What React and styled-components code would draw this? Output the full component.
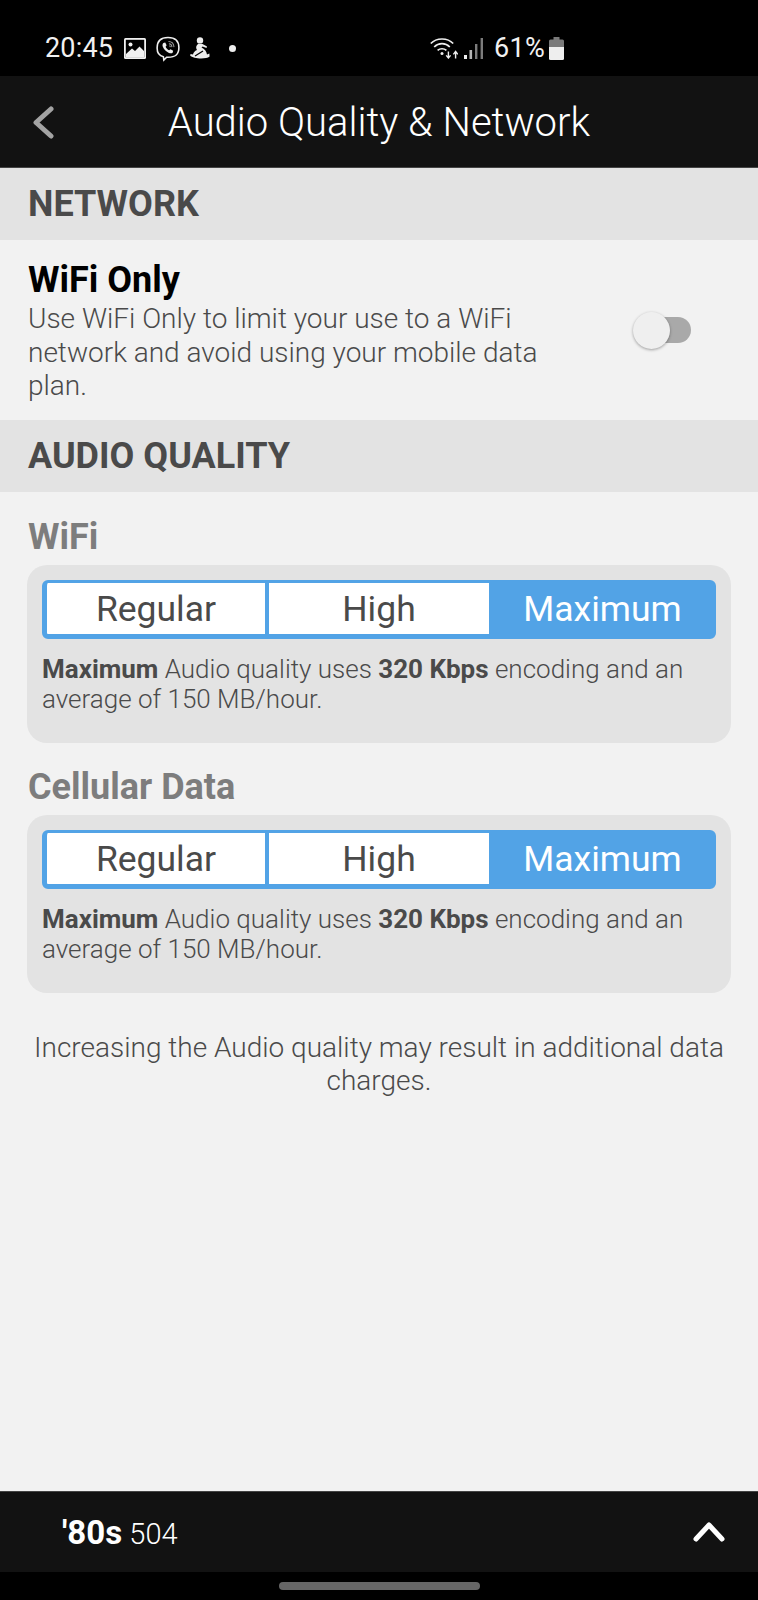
import styled, { createGlobalStyle } from 'styled-components';

const GlobalStyle = createGlobalStyle`
  html, body {
    margin: 0;
    padding: 0;
    background: #f2f2f2;
  }
  * {
    box-sizing: border-box;
  }
`;

const qualityRows = [
  { id: 'wifi', label: 'WiFi' },
  { id: 'cellular', label: 'Cellular Data' },
];
const qualityOptions = ['Regular', 'High', 'Maximum'];

const App = () => (
  <>
    <GlobalStyle />
    <Screen>
      <StatusBar>
        <StatusLeft>
          <StatusText>20:45</StatusText>
          <svg width="22" height="21" viewBox="0 0 22 21">
            <rect x="0" y="0" width="22" height="21" rx="1.5" fill="#f1f1f1" />
            <rect x="1.8" y="1.8" width="18.4" height="17.4" fill="#000" />
            <circle cx="6.5" cy="6.5" r="2" fill="#f1f1f1" />
            <path d="M2 16 L8 10.5 L11 13 L15.5 8.5 L20 13 L20 19.5 L2 19.5 Z" fill="#f1f1f1" />
          </svg>
          <svg width="24" height="27" viewBox="0 0 26 27" fill="none">
            <path d="M8 22.5 C3.5 21.5 1.2 18.5 1.2 13 C1.2 5 5 1.5 13 1.5 C21 1.5 24.8 5 24.8 12.5 C24.8 20 21 23 13 23 L11.5 23 L8.5 26 Z" stroke="#eee" strokeWidth="1.7" />
            <path d="M8 7.5 L10 7 L11.5 10 L10.4 11.6 C11.2 13.4 12.4 14.6 14.2 15.4 L15.8 14.3 L18.6 16 L18 18 C17.2 19 15.6 19 13.6 18 C10.6 16.6 8.8 14.6 7.4 11.6 C6.8 10 7 8.4 8 7.5 Z" fill="#eee" />
            <path d="M13.5 6 C16.8 6.1 19.3 8.6 19.5 12 M14 8.4 C16 8.6 17.2 9.9 17.3 12 M14.4 10.6 C15.2 10.8 15.5 11.2 15.6 12" stroke="#9a9a9a" strokeWidth="1.1" />
          </svg>
          <svg width="20" height="22" viewBox="0 0 20 22" fill="#eee">
            <circle cx="10" cy="3.4" r="3.2" />
            <path d="M8.5 6.8 C6 8.5 5.5 11 7 13 C4.5 14 3.5 15.5 3 17.5 L0.5 17 L0.2 18.8 C3 21.6 15.5 22.8 19.6 19.5 L19.4 16.5 L17 17.5 C16.5 14.5 14.5 12 11.5 10.6 L12.6 9.6 L16.5 11 L17 9.6 L12.5 7 Z" />
            <path d="M5 19 L13 14" stroke="#000" strokeWidth="1.2" />
          </svg>
          <Dot />
        </StatusLeft>
        <StatusRight>
          <svg width="28" height="22" viewBox="0 0 28 22" fill="none" stroke="#eee" strokeWidth="1.7">
            <path d="M0.8 6.5 C6.5 0.5 17.5 0.5 23.2 6.5" />
            <path d="M4.2 10 C8.5 5.6 15.5 5.6 19.8 10" />
            <path d="M7.6 13.4 C10 11.2 14 11.2 16.4 13.4" />
            <circle cx="12" cy="16.4" r="1.5" fill="#eee" stroke="none" />
            <path d="M18.4 14.5 V20.5 M16.2 18.4 L18.4 21 L20.6 18.4" strokeWidth="1.4" />
            <path d="M25.6 21.5 V15 M23.4 17.4 L25.6 14.4 L27.8 17.4" strokeWidth="1.4" />
          </svg>
          <svg width="19" height="21" viewBox="0 0 19 21">
            <rect x="0" y="17" width="3" height="4" fill="#eee" />
            <rect x="5.5" y="12" width="2.6" height="9" fill="#b5b5b5" />
            <rect x="11" y="6" width="2.4" height="15" fill="#7c7c7c" />
            <rect x="16.6" y="0" width="2.4" height="21" fill="#7c7c7c" />
          </svg>
          <BatteryPercent>61%</BatteryPercent>
          <svg width="15" height="23" viewBox="0 0 15 23">
            <path d="M4.5 0 H10.5 V2.5 H13.5 Q15 2.5 15 4 V10 H0 V4 Q0 2.5 1.5 2.5 H4.5 Z" fill="#7a7a7a" />
            <path d="M0 10 H15 V21.5 Q15 23 13.5 23 H1.5 Q0 23 0 21.5 Z" fill="#eee" />
          </svg>
        </StatusRight>
      </StatusBar>

      <Header>
        <BackButton>
          <svg width="21" height="33" viewBox="0 0 21 33" fill="none" stroke="#a3a3a3" strokeWidth="5" strokeLinecap="round" strokeLinejoin="round">
            <path d="M18 3 L3 16.5 L18 30" />
          </svg>
        </BackButton>
        <HeaderTitle>Audio Quality &amp; Network</HeaderTitle>
      </Header>

      <SectionHeader>NETWORK</SectionHeader>
      <NetworkRow>
        <NetworkText>
          <NetworkTitle>WiFi Only</NetworkTitle>
          <NetworkDesc>
            Use WiFi Only to limit your use to a WiFi network and avoid using your mobile data plan.
          </NetworkDesc>
        </NetworkText>
        <Switch>
          <SwitchKnob />
        </Switch>
      </NetworkRow>

      <SectionHeader>AUDIO QUALITY</SectionHeader>
      <Content>
        {qualityRows.map((row) => (
          <QualityBlock key={row.id}>
            <QualityLabel>{row.label}</QualityLabel>
            <QualityCard>
              <Segments>
                {qualityOptions.map((option) => (
                  <Segment key={option} $active={option === 'Maximum'}>
                    {option}
                  </Segment>
                ))}
              </Segments>
              <QualityNote>
                <strong>Maximum</strong> Audio quality uses <strong>320 Kbps</strong> encoding and an average of 150 MB/hour.
              </QualityNote>
            </QualityCard>
          </QualityBlock>
        ))}
        <Disclaimer>Increasing the Audio quality may result in additional data charges.</Disclaimer>
      </Content>

      <Footer>
        <StationName>
          <strong>'80s</strong> <span>504</span>
        </StationName>
        <svg width="32" height="20" viewBox="0 0 32 20" fill="none" stroke="#fff" strokeWidth="5" strokeLinecap="round" strokeLinejoin="round">
          <path d="M3 17 L16 3 L29 17" />
        </svg>
      </Footer>
      <NavBar>
        <HomePill />
      </NavBar>
    </Screen>
  </>
);

export default App;

const Screen = styled.div`
  width: 758px;
  height: 1600px;
  display: flex;
  flex-direction: column;
  background: #f2f2f2;
  font-family: 'Roboto', sans-serif;
  overflow: hidden;
`;

const StatusBar = styled.div`
  height: 76px;
  flex-shrink: 0;
  background: #000;
  display: flex;
  align-items: flex-start;
  justify-content: space-between;
  padding: 33px 194px 0 45px;
  color: #f1f1f1;
`;

const StatusLeft = styled.div`
  display: flex;
  align-items: center;
  gap: 10px;
  height: 30px;
`;

const StatusRight = styled.div`
  display: flex;
  align-items: center;
  gap: 6px;
  height: 30px;
`;

const StatusText = styled.span`
  font-size: 27px;
  font-weight: 400;
  letter-spacing: 0.2px;
  margin-right: 1px;
`;

const BatteryPercent = styled.span`
  font-size: 27px;
  font-weight: 400;
  letter-spacing: 0.3px;
  margin: 0 -2px 0 5px;
`;

const Dot = styled.span`
  width: 7px;
  height: 7px;
  margin-left: 9px;
  border-radius: 50%;
  background: #eee;
`;

const Header = styled.div`
  height: 92px;
  flex-shrink: 0;
  padding-top: 2px;
  background: #121212;
  border-bottom: 1px solid #444;
  display: flex;
  align-items: center;
  justify-content: center;
  position: relative;
`;

const BackButton = styled.div`
  position: absolute;
  left: 33px;
  top: 30px;
  line-height: 0;
`;

const HeaderTitle = styled.h1`
  margin: 0;
  font-size: 40px;
  font-weight: 300;
  color: #fff;
`;

const SectionHeader = styled.div`
  height: 72px;
  flex-shrink: 0;
  background: #e3e3e3;
  display: flex;
  align-items: center;
  padding-left: 28px;
  font-size: 36px;
  font-weight: 700;
  color: #4a4a4a;
`;

const NetworkRow = styled.div`
  height: 180px;
  flex-shrink: 0;
  display: flex;
  align-items: flex-start;
  padding: 19px 0 0 28px;
`;

const NetworkText = styled.div`
  width: 530px;
`;

const NetworkTitle = styled.div`
  font-size: 36px;
  line-height: 42px;
  font-weight: 700;
  color: #000;
`;

const NetworkDesc = styled.div`
  margin-top: 1px;
  font-size: 28px;
  line-height: 33.5px;
  font-weight: 300;
  color: #4a4a4a;
`;

const Switch = styled.div`
  position: relative;
  width: 52px;
  height: 26px;
  margin: 58px 0 0 81px;
  border-radius: 13px;
  background: #a9a9a9;
`;

const SwitchKnob = styled.div`
  position: absolute;
  left: -6px;
  top: -5px;
  width: 37px;
  height: 37px;
  border-radius: 50%;
  background: #efefef;
  box-shadow: 0 1px 3px rgba(0, 0, 0, 0.35);
`;

const Content = styled.div`
  flex: 1;
  padding: 0 27px;
`;

const QualityBlock = styled.div`
  padding-top: 25px;
  & + & {
    padding-top: 24px;
  }
`;

const QualityLabel = styled.div`
  padding-left: 1px;
  font-size: 36px;
  line-height: 40px;
  font-weight: 700;
  color: #7d7d7d;
  margin-bottom: 8px;
`;

const QualityCard = styled.div`
  height: 178px;
  background: #e3e3e3;
  border-radius: 20px;
  padding: 15px;
`;

const Segments = styled.div`
  display: grid;
  grid-template-columns: 222px 224px 1fr;
  height: 59px;
  border-style: solid;
  border-color: #52a3e6;
  border-width: 3px 4px 5px 5px;
  border-radius: 6px;
  background: #52a3e6;
  overflow: hidden;
`;

const Segment = styled.div`
  display: flex;
  align-items: center;
  justify-content: center;
  font-size: 35.5px;
  font-weight: 400;
  color: ${(props) => (props.$active ? '#fff' : '#4a4a4a')};
  background: ${(props) => (props.$active ? '#52a3e6' : '#fff')};
  border-right: ${(props) => (props.$active ? 'none' : '4px solid #52a3e6')};
`;

const QualityNote = styled.p`
  margin: 15px 0 0;
  font-size: 26px;
  line-height: 30px;
  font-weight: 300;
  color: #4a4a4a;
  strong {
    font-weight: 700;
  }
`;

const Disclaimer = styled.p`
  margin: 38px 0 0;
  font-size: 28px;
  line-height: 33px;
  font-weight: 300;
  text-align: center;
  color: #4a4a4a;
`;

const Footer = styled.div`
  height: 81px;
  flex-shrink: 0;
  background: #121212;
  border-top: 1px solid #444;
  display: flex;
  align-items: center;
  justify-content: space-between;
  padding: 0 33px 0 62px;
`;

const StationName = styled.div`
  color: #fff;
  font-size: 29px;
  strong {
    font-weight: 700;
    font-size: 33px;
  }
  span {
    font-weight: 300;
  }
`;

const NavBar = styled.div`
  height: 28px;
  flex-shrink: 0;
  background: #000;
  display: flex;
  justify-content: center;
  padding-top: 10px;
`;

const HomePill = styled.div`
  width: 201px;
  height: 8px;
  border-radius: 4px;
  background: #666;
`;
